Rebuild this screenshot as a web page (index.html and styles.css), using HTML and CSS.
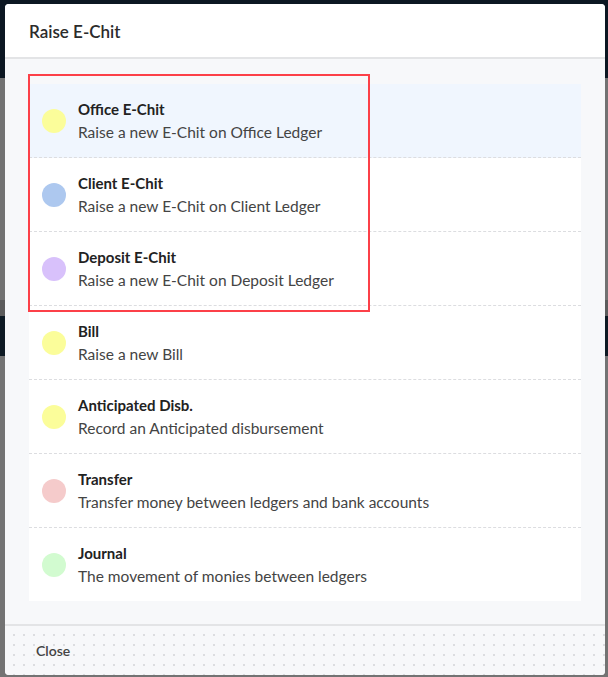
FILE: index.html
```html
<!DOCTYPE html>
<html lang="en">
  <head>
    <meta charset="UTF-8" />
    <meta name="viewport" content="width=device-width, initial-scale=1.0" />
    <title>Raise E-Chit</title>
    <link rel="stylesheet" href="styles.css">
  </head>
  <body>
    <div class="modal">
      <div class="modal-header">
        <h3>Raise E-Chit</h3>
      </div>

      <div class="modal-body">
        <ul class="chit-list">
          <li class="chit-item active">
            <span class="dot yellow"></span>
            <div class="chit-text">
              <strong>Office E-Chit</strong>
              <span>Raise a new E-Chit on Office Ledger</span>
            </div>
          </li>
          <li class="chit-item">
            <span class="dot blue"></span>
            <div class="chit-text">
              <strong>Client E-Chit</strong>
              <span>Raise a new E-Chit on Client Ledger</span>
            </div>
          </li>
          <li class="chit-item">
            <span class="dot purple"></span>
            <div class="chit-text">
              <strong>Deposit E-Chit</strong>
              <span>Raise a new E-Chit on Deposit Ledger</span>
            </div>
          </li>
          <li class="chit-item">
            <span class="dot yellow"></span>
            <div class="chit-text">
              <strong>Bill</strong>
              <span>Raise a new Bill</span>
            </div>
          </li>
          <li class="chit-item">
            <span class="dot yellow"></span>
            <div class="chit-text">
              <strong>Anticipated Disb.</strong>
              <span>Record an Anticipated disbursement</span>
            </div>
          </li>
          <li class="chit-item">
            <span class="dot red"></span>
            <div class="chit-text">
              <strong>Transfer</strong>
              <span>Transfer money between ledgers and bank accounts</span>
            </div>
          </li>
          <li class="chit-item">
            <span class="dot green"></span>
            <div class="chit-text">
              <strong>Journal</strong>
              <span>The movement of monies between ledgers</span>
            </div>
          </li>
        </ul>
        <!-- highlight box around the e-chit options -->
        <div class="highlight"></div>
      </div>

      <div class="modal-footer">
        <button type="button" class="btn-close">Close</button>
      </div>
    </div>
  </body>
</html>
```

FILE: styles.css
```css
body {
  font-family: "Lato", "Noto Sans", sans-serif;
  margin: 0;
  padding: 4px 3px 2px 5px;
  background: linear-gradient(
    to bottom,
    #0c1722 0,
    #0c1722 78px,
    #727272 78px,
    #727272 300px,
    #5c5c5c 300px,
    #5c5c5c 316px,
    #0e1a24 316px,
    #0e1a24 356px,
    #737373 356px
  );
  height: 671px;
  box-sizing: content-box;
}

.modal {
  width: 600px;
  height: 671px;
  background: #f7f8fa;
  border-radius: 4px;
  display: flex;
  flex-direction: column;
  overflow: hidden;
}

.modal-header {
  background: white;
  height: 54px;
  border-bottom: 2px solid #e3e4e6;
  display: flex;
  align-items: center;
  padding: 1px 24px 0;
  box-sizing: border-box;
  height: 56px;
}

.modal-header h3 {
  margin: 0;
  font-size: 17px;
  font-weight: 600;
  color: #2b2b2b;
}

.modal-body {
  position: relative;
  flex: 1;
  padding: 25px 24px 23px 24px;
}

.chit-list {
  list-style: none;
  margin: 0;
  padding: 0;
  background: white;
}

.chit-item {
  display: flex;
  align-items: center;
  gap: 12px;
  height: 73px;
  padding: 0 13px;
  border-bottom: 1px dashed #dcdde0;
}

.chit-item:last-child {
  border-bottom: none;
}

.chit-item.active {
  background-color: #f0f6fe;
}

.dot {
  width: 24px;
  height: 24px;
  border-radius: 50%;
  flex-shrink: 0;
}

.dot.yellow {
  background-color: #fbfd9a;
}

.dot.blue {
  background-color: #adc8ef;
}

.dot.purple {
  background-color: #d8c1fb;
}

.dot.red {
  background-color: #f5cbcb;
}

.dot.green {
  background-color: #d2fbd0;
}

.chit-text {
  display: flex;
  flex-direction: column;
  gap: 5px;
  margin-top: -1px;
}

.chit-text strong {
  font-size: 15px;
  font-weight: 700;
  color: #222;
}

.chit-text span {
  font-size: 15.5px;
  color: #444;
}

.highlight {
  position: absolute;
  left: 23px;
  top: 15px;
  width: 338px;
  height: 234px;
  border: 2px solid #fc4048;
}

.modal-footer {
  height: 49px;
  border-top: 2px solid #e3e4e6;
  background-color: #f7f8fa;
  background-image: radial-gradient(#dcdde0 1px, transparent 1.2px);
  background-size: 10px 10px;
  background-position: 4px 4px;
  display: flex;
  align-items: center;
  padding: 0 31px;
}

.btn-close {
  border: none;
  background: none;
  padding: 0;
  font-family: inherit;
  font-size: 14px;
  font-weight: 600;
  color: #444;
  cursor: pointer;
}
```
